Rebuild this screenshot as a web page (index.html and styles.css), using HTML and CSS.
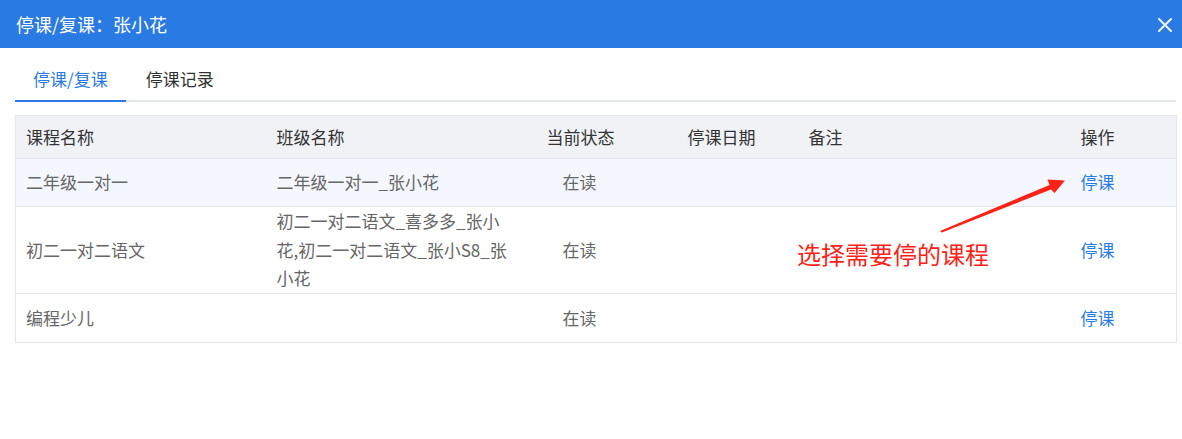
FILE: index.html
```html
<!DOCTYPE html>
<html lang="zh-CN">
<head>
<meta charset="utf-8">
<title>停课/复课</title>
<link rel="stylesheet" href="styles.css">
</head>
<body>
<div class="dialog">
  <div class="dialog-header">
    <span class="dialog-title">停课/复课：张小花</span>
    <svg class="close" width="14" height="14" viewBox="0 0 14 14"><path d="M1 1 L13 13 M13 1 L1 13" stroke="#eef4fd" stroke-width="2" stroke-linecap="square" fill="none"/></svg>
  </div>
  <div class="dialog-body">
    <div class="tabs">
      <div class="tab active">停课/复课</div>
      <div class="tab">停课记录</div>
    </div>
    <div class="table-wrap">
      <table class="grid">
        <colgroup>
          <col class="c1"><col class="c2"><col class="c3"><col class="c4"><col class="c5"><col class="c6">
        </colgroup>
        <thead>
          <tr><th>课程名称</th><th>班级名称</th><th>当前状态</th><th>停课日期</th><th>备注</th><th>操作</th></tr>
        </thead>
        <tbody>
          <tr class="hover">
            <td>二年级一对一</td>
            <td class="cls">二年级一对一_张小花</td>
            <td class="status">在读</td>
            <td></td><td></td>
            <td><a class="op">停课</a></td>
          </tr>
          <tr>
            <td>初二一对二语文</td>
            <td class="cls">初二一对二语文_喜多多_张小花,初二一对二语文_张小S8_张小花</td>
            <td class="status">在读</td>
            <td></td><td></td>
            <td><a class="op">停课</a></td>
          </tr>
          <tr class="last">
            <td>编程少儿</td>
            <td class="cls"></td>
            <td class="status">在读</td>
            <td></td><td></td>
            <td><a class="op">停课</a></td>
          </tr>
        </tbody>
      </table>
    </div>
  </div>
  <div class="note">选择需要停的课程</div>
  <svg class="arrow" width="1182" height="439" viewBox="0 0 1182 439">
    <polygon points="940,231 942,232.5 1051,189.5 1054.5,193 1065,180.5 1047.5,179.5 1049.5,185" fill="#fe2216"/>
  </svg>
</div>
</body>
</html>
```
FILE: styles.css
```css
* { box-sizing: border-box; }
html, body { margin: 0; padding: 0; background: #fff; }
body {
  font-family: "Noto Sans CJK SC", "Noto Sans", sans-serif;
  width: 1182px;
  height: 439px;
  overflow: hidden;
}
.dialog { position: relative; width: 1182px; height: 439px; }
.dialog-header {
  height: 48px;
  background: #2a7ae4;
  display: flex;
  align-items: center;
  justify-content: space-between;
  padding: 0 10px 0 16px;
}
.dialog-title {
  color: #fff;
  font-size: 18px;
  line-height: 24px;
}
.close { display: block; margin-top: 1px; }
.dialog-body { padding: 12px 6px 0 15px; }
.tabs {
  display: flex;
  border-bottom: 2px solid #e4e7ed;
  height: 42px;
}
.tab {
  height: 42px;
  line-height: 38px;
  font-size: 17px;
  color: #303133;
  padding: 0 18px;
  margin-bottom: -2px;
  border-bottom: 2px solid transparent;
}
.tab + .tab { padding-left: 20px; }
.tab.active { color: #2a7ae4; border-bottom-color: #2a7ae4; }
.table-wrap { margin-top: 13px; }
.grid {
  width: 1161px;
  border-collapse: collapse;
  table-layout: fixed;
  border: 1px solid #e4e7ed;
  font-size: 17px;
}
.c1 { width: 251px; }
.c2 { width: 270px; }
.c3 { width: 141px; }
.c4 { width: 121px; }
.c5 { width: 272px; }
.c6 { width: 106px; }
.grid th {
  background: #f0f2f6;
  color: #333;
  font-weight: normal;
  text-align: left;
  height: 43px;
  padding: 0 10px;
  border-bottom: 1px solid #e4e7ed;
  line-height: 24px;
}
.grid td {
  color: #666;
  padding: 0 10px;
  height: 48px;
  line-height: 28.67px;
  border-bottom: 1px solid #e4e7ed;
  vertical-align: middle;
}
.grid tr.last td { height: 49px; }
.grid td.cls { padding-right: 29px; }
.grid td.status { padding-left: 26px; }
.grid tr.hover td { background: #f4f8fe; }
.op { color: #2a7ae4; text-decoration: none; cursor: pointer; }
.note {
  position: absolute;
  left: 797px;
  top: 239px;
  font-size: 24px;
  line-height: 30px;
  color: #fe2216;
}
.arrow { position: absolute; left: 0; top: 0; pointer-events: none; }
```
